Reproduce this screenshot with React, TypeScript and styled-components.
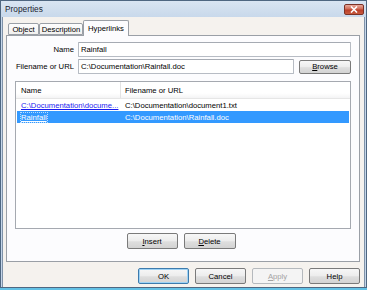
import React from 'react';
import styled, { createGlobalStyle } from 'styled-components';

const GlobalStyle = createGlobalStyle`
  html, body {
    margin: 0;
    padding: 0;
    background: #63c1e5;
  }
  body {
    font-family: "Liberation Sans", Arial, sans-serif;
    font-size: 7.7px;
    color: #000;
  }
`;

// Window chrome
const Window = styled.div`
  box-sizing: border-box;
  width: 367px;
  height: 288px;
  display: flex;
  flex-direction: column;
  border: 1px solid #4f6781;
  padding: 0 1px;
  background: linear-gradient(#d9e5f2, #c6d7ea 18px, #c3d4e8);
`;

const TitleBar = styled.div`
  height: 16px;
  flex: none;
  display: flex;
  align-items: flex-start;
  padding-left: 3px;
`;

const Title = styled.span`
  font-size: 8.3px;
  line-height: 16px;
  color: #1b2430;
`;

const CloseButton = styled.div`
  box-sizing: border-box;
  margin: 3px 1px 0 auto;
  width: 20px;
  height: 11px;
  border: 1px solid #7b3226;
  border-radius: 2px;
  background: linear-gradient(#e8aa9c, #d06a55 45%, #bb3f28 55%, #c85a3f);
  display: flex;
  align-items: center;
  justify-content: center;
`;

const Client = styled.div`
  flex: 1;
  display: flex;
  flex-direction: column;
  background: #f5f2ee;
  border-left: 1px solid #7f92a8;
  border-right: 1px solid #7f92a8;
`;

// Tabs
const TabRow = styled.div`
  display: flex;
  align-items: flex-end;
  height: 18px;
  padding: 3px 0 0 5px;
  box-sizing: border-box;
  position: relative;
  z-index: 1;
`;

const Tab = styled.div<{ $active?: boolean; $width: number }>`
  box-sizing: border-box;
  width: ${p => p.$width}px;
  height: ${p => (p.$active ? 16 : 12)}px;
  margin-bottom: ${p => (p.$active ? -1 : 0)}px;
  border: 1px solid #9a9fa6;
  border-bottom: ${p => (p.$active ? 'none' : '1px solid #9a9fa6')};
  border-radius: 2px 2px 0 0;
  background: ${p => (p.$active ? '#fcfcfe' : 'linear-gradient(#fdfdfd, #f1f0ee)')};
  display: flex;
  justify-content: center;
  align-items: ${p => (p.$active ? 'flex-start' : 'center')};
  padding-top: ${p => (p.$active ? 3 : 0)}px;
  white-space: nowrap;
`;

const Panel = styled.div`
  box-sizing: border-box;
  height: 227px;
  margin: 0 4px 0 3px;
  border: 1px solid #9a9fa6;
  background: #fcfcfe;
  display: flex;
  flex-direction: column;
`;

// Form
const Form = styled.div`
  display: grid;
  grid-template-columns: 64px 1fr;
  grid-auto-rows: 15px;
  column-gap: 4px;
  row-gap: 2px;
  padding: 6px 8px 0 3px;
`;

const Label = styled.label`
  display: flex;
  align-items: center;
  justify-content: flex-end;
  white-space: nowrap;
`;

const Field = styled.div`
  box-sizing: border-box;
  flex: 1;
  height: 15px;
  border: 1px solid #b7bcc4;
  border-top-color: #a6abb3;
  border-radius: 1px;
  background: #fff;
  padding-left: 2px;
  display: flex;
  align-items: center;
  white-space: nowrap;
  overflow: hidden;
`;

const FieldRow = styled.div`
  display: flex;
  align-items: center;
  gap: 5px;
`;

const Button = styled.div<{ $width?: number; $height?: number; $default?: boolean; $disabled?: boolean }>`
  box-sizing: border-box;
  flex: none;
  width: ${p => p.$width ?? 51}px;
  height: ${p => p.$height ?? 16}px;
  border: 1px solid ${p => (p.$default ? '#3d7bad' : p.$disabled ? '#b5b9bd' : '#7a7a7a')};
  border-radius: 2px;
  background: ${p =>
    p.$disabled ? '#f4f4f4' : 'linear-gradient(#f7f7f7, #ececec 50%, #dedede 55%, #d3d3d3)'};
  box-shadow: ${p => (p.$default ? 'inset 0 0 0 1px #9fd3f5' : 'none')};
  color: ${p => (p.$disabled ? '#a3a3a3' : '#000')};
  display: flex;
  align-items: center;
  justify-content: center;
  white-space: nowrap;
`;

const Key = styled.span`
  text-decoration: underline;
`;

// List view
const ListView = styled.div`
  box-sizing: border-box;
  height: 148px;
  margin: 7px 8px 0 8px;
  border: 1px solid #a5a9b0;
  background: #fff;
`;

const HeaderRow = styled.div`
  display: flex;
  height: 16px;
  border-bottom: 1px solid #e6e6e6;
  background: linear-gradient(#ffffff, #ffffff 70%, #f4f4f5);
`;

const HeaderCell = styled.div<{ $first?: boolean }>`
  box-sizing: border-box;
  width: ${p => (p.$first ? '105px' : 'auto')};
  flex: ${p => (p.$first ? 'none' : '1')};
  border-right: ${p => (p.$first ? '1px solid #e3e3e3' : 'none')};
  padding-left: ${p => (p.$first ? 5 : 4)}px;
  display: flex;
  align-items: center;
`;

const Row = styled.div<{ $selected?: boolean }>`
  display: flex;
  height: 12px;
  align-items: center;
  margin: 0 1px;
  background: ${p => (p.$selected ? '#3399ff' : 'transparent')};
  color: ${p => (p.$selected ? '#fff' : '#000')};
`;

const Cell = styled.div<{ $first?: boolean }>`
  box-sizing: border-box;
  width: ${p => (p.$first ? '104px' : 'auto')};
  flex: ${p => (p.$first ? 'none' : '1')};
  padding: ${p => (p.$first ? '0 0 0 4px' : '0 0 0 4px')};
  white-space: nowrap;
`;

const Link = styled.span<{ $selected?: boolean }>`
  color: ${p => (p.$selected ? '#fff' : '#1b1bf0')};
  text-decoration: underline;
  outline: ${p => (p.$selected ? '1px dotted #b9dcff' : 'none')};
`;

const ButtonRow = styled.div`
  display: flex;
  justify-content: center;
  gap: 6px;
  margin-top: 4px;
  padding-right: 4px;
`;

const Footer = styled.div`
  display: flex;
  justify-content: flex-end;
  gap: 6px;
  margin-top: 6px;
  padding-right: 4px;
`;

// names as the list view shows them (first one already shortened by the control)
const links = [
  { name: 'C:\\Documentation\\docume...', url: 'C:\\Documentation\\document1.txt' },
  { name: 'Rainfall', url: 'C:\\Documentation\\Rainfall.doc' },
];

const App: React.FC = () => {
  return (
    <>
      <GlobalStyle />
      <Window>
        <TitleBar>
          <Title>Properties</Title>
          <CloseButton>
            <svg width="8" height="7" viewBox="0 0 8 7">
              <path d="M1 0.5 L7 6.5 M7 0.5 L1 6.5" stroke="#fff" strokeWidth="1.6" />
            </svg>
          </CloseButton>
        </TitleBar>
        <Client>
          <TabRow>
            <Tab $width={31}>Object</Tab>
            <Tab $width={44}>Description</Tab>
            <Tab $width={46} $active>Hyperlinks</Tab>
          </TabRow>
          <Panel>
            <Form>
              <Label>Name</Label>
              <Field>Rainfall</Field>
              <Label>Filename or URL</Label>
              <FieldRow>
                <Field>C:\Documentation\Rainfall.doc</Field>
                <Button $width={52} $height={14}>
                  <Key>B</Key>rowse
                </Button>
              </FieldRow>
            </Form>
            <ListView>
              <HeaderRow>
                <HeaderCell $first>Name</HeaderCell>
                <HeaderCell>Filename or URL</HeaderCell>
              </HeaderRow>
              {links.map((link, index) => {
                const selected = index === 1;
                return (
                  <Row key={index} $selected={selected}>
                    <Cell $first>
                      <Link $selected={selected}>{link.name}</Link>
                    </Cell>
                    <Cell>{link.url}</Cell>
                  </Row>
                );
              })}
            </ListView>
            <ButtonRow>
              <Button>
                <Key>I</Key>nsert
              </Button>
              <Button $width={52}>
                <Key>D</Key>elete
              </Button>
            </ButtonRow>
          </Panel>
          <Footer>
            <Button $default>OK</Button>
            <Button>Cancel</Button>
            <Button $disabled>
              <Key>A</Key>pply
            </Button>
            <Button>Help</Button>
          </Footer>
        </Client>
      </Window>
    </>
  );
};

export default App;
